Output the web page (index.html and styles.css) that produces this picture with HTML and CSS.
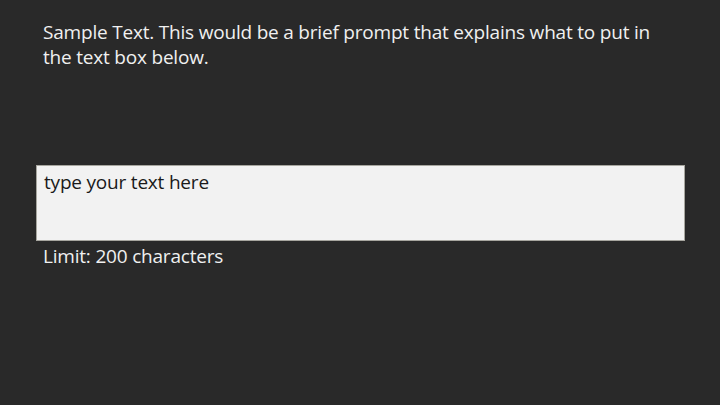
FILE: index.html
```html
<!DOCTYPE html>
<html>
<head>
<meta charset="utf-8">
<link rel="stylesheet" href="styles.css">
</head>
<body>
<div class="page">
  <p class="prompt">Sample Text. This would be a brief prompt that explains what to put in the text box below.</p>
  <div class="field">
    <div class="box">type your text here</div>
    <p class="limit">Limit: 200 characters</p>
  </div>
</div>
</body>
</html>
```

FILE: styles.css
```css
html, body {
  margin: 0;
  padding: 0;
  background: #292929;
}
.page {
  width: 720px;
  height: 405px;
  box-sizing: border-box;
  padding: 20px 35px 0 36px;
  font-family: "Open Sans", sans-serif;
  color: #f0f0f0;
}
.prompt {
  margin: 0;
  padding-left: 7px;
  font-size: 19px;
  letter-spacing: -0.2px;
  line-height: 25px;
  width: 630px;
}
.field {
  margin-top: 95px;
}
.box {
  box-sizing: border-box;
  width: 649px;
  height: 76px;
  background: #f2f2f2;
  border: 1px solid #a7a69f;
  color: #1a1a1a;
  font-size: 19px;
  letter-spacing: -0.2px;
  line-height: 25px;
  padding: 4px 7px;
}
.limit {
  margin: 0;
  padding-left: 7px;
  font-size: 19px;
  letter-spacing: -0.2px;
  line-height: 30px;
}
```
